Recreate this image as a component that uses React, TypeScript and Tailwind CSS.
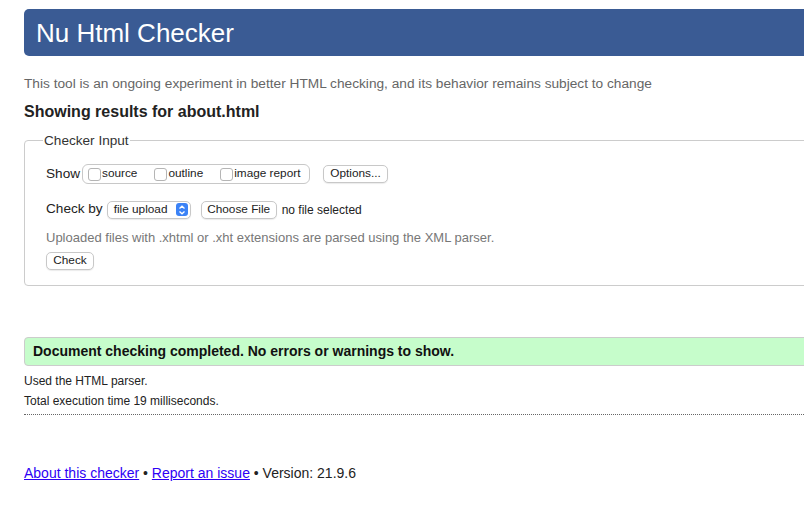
import React from 'react';

function Box({ label }: { label: string }) {
  return (
    <label className="flex items-center">
      <span className="inline-block w-[13px] h-[13px] rounded-[3px] border border-[#b5b5b5] bg-white mr-[1px]" />
      <span>{label}</span>
    </label>
  );
}

function Btn({ children, className = '' }: { children: React.ReactNode; className?: string }) {
  return (
    <button
      type="button"
      className={`h-[18px] px-[4px] whitespace-nowrap rounded-[5px] border border-[#c8c8c8] bg-white text-[11.8px] leading-none text-[#222] shadow-[0_1px_1px_rgba(0,0,0,0.08)] ${className}`}
    >
      {children}
    </button>
  );
}

export default function App() {
  return (
    <div className="w-[804px] h-[509px] overflow-hidden bg-white font-['Liberation_Sans',Arial,sans-serif] text-[#222]">
      <div className="ml-6 w-[820px] pt-[9px]">
        <h1 className="h-[47px] rounded-l-[5px] bg-[#3a5b94] text-white text-[26px] leading-[48px] pl-3">
          Nu Html Checker
        </h1>

        <p className="mt-[18px] text-[13.7px] text-[#666]">
          This tool is an ongoing experiment in better HTML checking, and its behavior remains subject to change
        </p>
        <h2 className="mt-[5px] text-[16px] font-bold text-[#222]">Showing results for about.html</h2>

        <fieldset className="mt-[7px] h-[155px] border border-[#ccc] rounded-[4px] pl-[21px] pr-3 pt-[13px]">
          <legend className="px-[1px] -ml-[3px] text-[13.6px] text-[#333]">Checker Input</legend>

          <div className="flex items-center text-[13.6px]">
            <span className="mr-[2px]">Show</span>
            <div className="flex items-center h-[20px] w-[228px] rounded-[6px] border border-[#c8c8c8] px-[5px] text-[11.8px] gap-[17px]">
              <Box label="source" />
              <Box label="outline" />
              <Box label="image report" />
            </div>
            <Btn className="ml-[13px] w-[65px]">Options...</Btn>
          </div>

          <div className="flex items-center mt-[15px] text-[13.6px]">
            <span className="mr-[4px]">Check by</span>
            <div className="flex items-center justify-between h-[18px] w-[84px] rounded-[5px] border border-[#c8c8c8] bg-white pl-[6px] pr-[2px] text-[11.8px] shadow-[0_1px_1px_rgba(0,0,0,0.08)]">
              <span>file upload</span>
              <span className="flex items-center justify-center w-[12px] h-[13px] rounded-[3px] bg-[#3b82f6]">
                <svg width="8" height="10" viewBox="0 0 8 10" fill="none" stroke="white" strokeWidth="1.3">
                  <path d="M1.5 3.5 L4 1.2 L6.5 3.5" />
                  <path d="M1.5 6.5 L4 8.8 L6.5 6.5" />
                </svg>
              </span>
            </div>
            <Btn className="ml-[10px] w-[76px]">Choose File</Btn>
            <span className="ml-[5px] text-[12px]">no file selected</span>
          </div>

          <p className="mt-[8px] text-[13px] text-[#777]">
            Uploaded files with .xhtml or .xht extensions are parsed using the XML parser.
          </p>

          <Btn className="mt-[5px] w-[48px]">Check</Btn>
        </fieldset>

        <div className="mt-[51px] h-[29px] flex items-center rounded-l-[4px] border border-[#ccc] bg-[#c6fdcb] pl-[8px] text-[14px] font-bold text-[#111]">
          Document checking completed. No errors or warnings to show.
        </div>

        <p className="mt-[8px] text-[12px] leading-[14px]">Used the HTML parser.</p>
        <p className="mt-[6px] text-[12px] leading-[14px]">Total execution time 19 milliseconds.</p>
        <div className="mt-[6px] border-t border-dotted border-[#666]" />

        <p className="mt-[48px] text-[14px] text-[#222]">
          <a href="#" className="text-[#2d00f5] underline">About this checker</a>
          {' • '}
          <a href="#" className="text-[#2d00f5] underline">Report an issue</a>
          {' • Version: 21.9.6'}
        </p>
      </div>
    </div>
  );
}
